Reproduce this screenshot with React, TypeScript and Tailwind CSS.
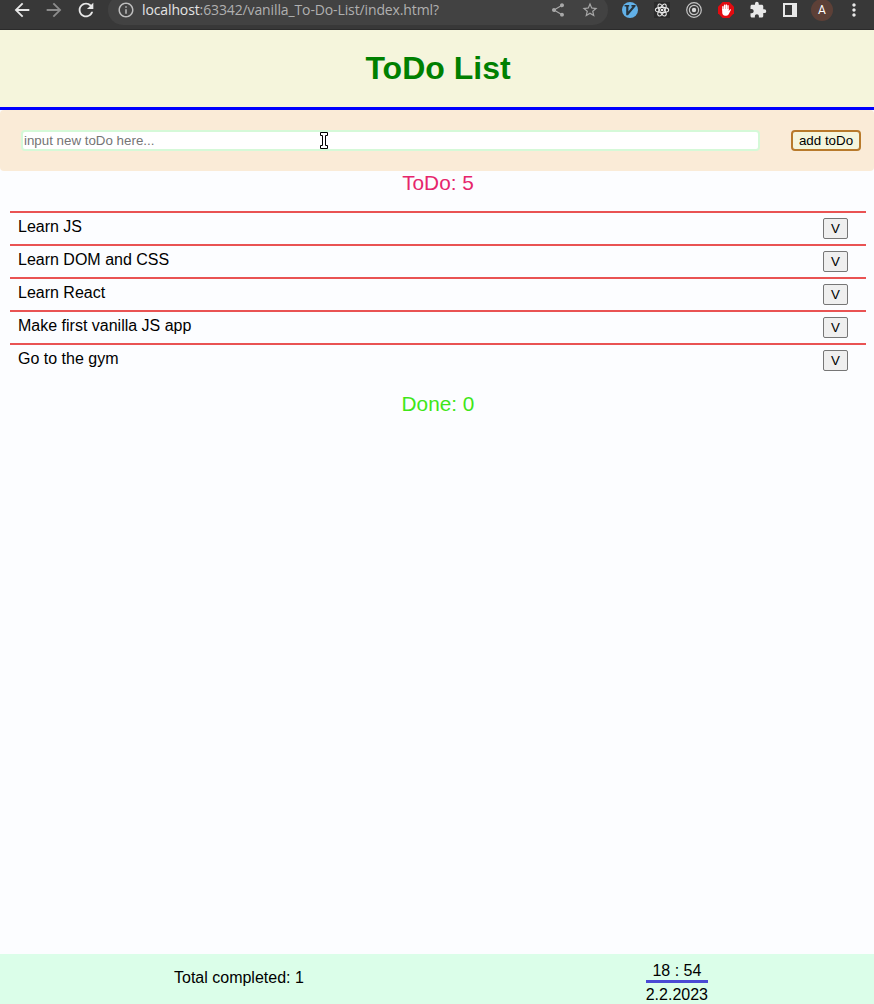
import React from 'react';
import {
  MdArrowBack,
  MdArrowForward,
  MdRefresh,
  MdInfoOutline,
  MdShare,
  MdStarBorder,
  MdExtension,
  MdMoreVert,
} from 'react-icons/md';

const todos = ['Learn JS', 'Learn DOM and CSS', 'Learn React', 'Make first vanilla JS app', 'Go to the gym'];

function Slot({ children }: { children: React.ReactNode }) {
  return <div className="flex h-8 w-8 shrink-0 items-center justify-center">{children}</div>;
}

function VimIcon() {
  return (
    <svg width="16" height="16" viewBox="0 0 16 16">
      <circle cx="8" cy="8" r="8" fill="#62b1e8" />
      <path d="M2.6 3h4.6v1.4H6.4v5.2l4.2-5.2H9.4V3h4.2v1.3L6 13.3H4.2V4.4H2.6z" fill="#27343d" />
    </svg>
  );
}

function ReactIcon() {
  return (
    <svg width="16" height="16" viewBox="0 0 16 16" fill="none" stroke="#e6e6e6" strokeWidth="1.1">
      <rect width="16" height="16" fill="#2b2b2b" stroke="none" />
      <ellipse cx="8" cy="8" rx="6.7" ry="2.6" />
      <ellipse cx="8" cy="8" rx="6.7" ry="2.6" transform="rotate(60 8 8)" />
      <ellipse cx="8" cy="8" rx="6.7" ry="2.6" transform="rotate(120 8 8)" />
      <circle cx="8" cy="8" r="1.3" fill="#e6e6e6" stroke="none" />
    </svg>
  );
}

function TargetIcon() {
  return (
    <svg width="16" height="16" viewBox="0 0 16 16" fill="none" stroke="#c4c4c4" strokeWidth="1.2">
      <circle cx="8" cy="8" r="7.3" />
      <circle cx="8" cy="8" r="4.6" />
      <circle cx="8" cy="8" r="2.2" fill="#d8d8d8" stroke="none" />
    </svg>
  );
}

function BlockIcon() {
  return (
    <svg width="16" height="16" viewBox="0 0 16 16">
      <path d="M4.7 0h6.6L16 4.7v6.6L11.3 16H4.7L0 11.3V4.7z" fill="#e30b10" />
      <path
        d="M4.9 8V4.7M6.6 7.5V3.3M8.3 7.5V2.9M10 7.5V3.7"
        stroke="#fff"
        strokeWidth="1.4"
        strokeLinecap="round"
      />
      <path d="M4.2 7h6.5v2l1.3-1.6c.6-.5 1.2 0 .9.7l-2.1 4c-.5 1-1.3 1.6-2.4 1.6H7.2c-1.8 0-3-1.3-3-3.2z" fill="#fff" />
    </svg>
  );
}

function BrowserBar() {
  return (
    <div className="h-[30px] shrink-0 overflow-hidden border-b border-[#2b2b2b] bg-[#383838] text-[#e8e8e8]">
      <div className="flex h-5 items-center pl-1.5">
        <Slot><MdArrowBack size={22} /></Slot>
        <Slot><MdArrowForward size={22} color="#8c8c8c" /></Slot>
        <Slot><MdRefresh size={22} /></Slot>
        <div className="ml-1.5 flex h-[30px] w-[500px] items-center rounded-full bg-[#424242] pr-0.5 pl-0.5 text-[#a8a8a8]">
          <Slot><MdInfoOutline size={18} color="#bdbdbd" /></Slot>
          <div className="grow whitespace-nowrap font-['Open_Sans',sans-serif] text-[14px] leading-5 tracking-[-0.12px] text-[#b0b0b0]">
            <span className="text-[#e4e4e4]">localhost</span>:63342/vanilla_To-Do-List/index.html?
          </div>
          <Slot><MdShare size={16} /></Slot>
          <Slot><MdStarBorder size={18} /></Slot>
        </div>
        <div className="ml-1.5 flex">
          <Slot><VimIcon /></Slot>
          <Slot><ReactIcon /></Slot>
          <Slot><TargetIcon /></Slot>
          <Slot><BlockIcon /></Slot>
          <Slot><MdExtension size={18} /></Slot>
          <Slot>
            <div className="h-3.5 w-3.5 border-2 border-r-[5px] border-[#e8e8e8]" />
          </Slot>
          <Slot>
            <div className="flex h-[22px] w-[22px] items-center justify-center rounded-full bg-[#5d4037] font-['Roboto',sans-serif] text-[12px] text-white">
              A
            </div>
          </Slot>
          <Slot><MdMoreVert size={20} /></Slot>
        </div>
      </div>
    </div>
  );
}

function TextCursor() {
  return (
    <svg className="absolute top-[2px] left-[299px]" width="8" height="17" viewBox="0 0 8 17">
      <path
        d="M.5.5h7v3h-2v10h2v3h-7v-3h2v-10h-2z"
        fill="#fff"
        stroke="#000"
        strokeWidth="1"
        strokeLinejoin="round"
      />
    </svg>
  );
}

export default function App() {
  return (
    <div className="flex h-[1004px] w-full flex-col overflow-hidden bg-[#fcfdff] font-['Liberation_Sans',Arial,sans-serif] text-[16px] text-black">
      <BrowserBar />
      <header className="h-20 shrink-0 border-b-[3px] border-[#0000ff] bg-[#f5f5dc] pl-0.5 text-center">
        <h1 className="pt-5 text-[32px] leading-[37px] font-bold text-[#008000]">ToDo List</h1>
      </header>
      <form className="flex h-[61px] shrink-0 items-start rounded-[4px] bg-[#faebd7] pt-5 pr-[13px] pl-[21px]">
        <div className="relative mr-[31px] flex grow">
          <input
            className="h-[21px] w-full rounded-[4px] border-2 border-[#d5f9d8] bg-white px-px text-[13.333px] placeholder:text-[#757575]"
            placeholder="input new toDo here..."
          />
          <TextCursor />
        </div>
        <button
          type="button"
          className="h-[21px] w-[70px] rounded-[4px] border-2 border-[#b87a2b] bg-[#f5f5dc] text-[13.333px] leading-[17px] whitespace-nowrap"
        >
          add toDo
        </button>
      </form>
      <main className="grow pr-2 pl-2.5">
        <h2 className="h-10 text-center text-[20.8px] leading-6 text-[#e6256b]">ToDo: 5</h2>
        <ul>
          {todos.map((todo) => (
            <li key={todo} className="flex h-[33px] justify-between border-t-2 border-[#e95353] pr-[18px] pl-2">
              <span className="pt-[5px] leading-[18px]">{todo}</span>
              <button
                type="button"
                className="mt-[5px] h-[21px] w-[25px] rounded-[2px] border border-[#767676] bg-[#efefef] text-[13.333px] leading-[19px]"
              >
                V
              </button>
            </li>
          ))}
        </ul>
        <h2 className="mt-4 text-center text-[20.8px] leading-6 text-[#3fe619]">Done: 0</h2>
      </main>
      <footer className="flex h-[50px] shrink-0 justify-between bg-[#dbfee9] pr-[166px] pl-[174px]">
        <p className="pt-[15px] leading-[18px]">Total completed: 1</p>
        <div className="pt-2 text-center leading-[18px]">
          <div className="border-b-[3px] border-[#4a4ad4]">18 : 54</div>
          <div className="pt-[3px]">2.2.2023</div>
        </div>
      </footer>
    </div>
  );
}
